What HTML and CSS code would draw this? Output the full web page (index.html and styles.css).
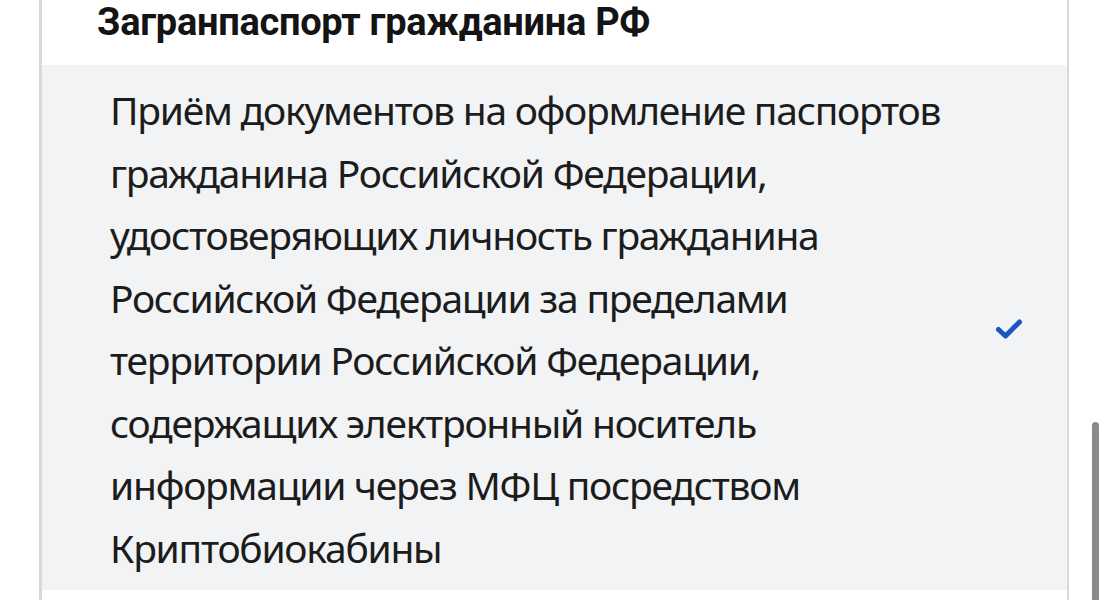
FILE: index.html
```html
<!DOCTYPE html>
<html lang="ru">
<head>
<meta charset="utf-8">
<link rel="stylesheet" href="styles.css">
</head>
<body>
<div class="page">
  <div class="card">
    <h2 class="group-title">Загранпаспорт гражданина РФ</h2>
    <div class="option selected">
      <p class="option-text">Приём документов на оформление паспортов<br>гражданина Российской Федерации,<br>удостоверяющих личность гражданина<br>Российской Федерации за пределами<br>территории Российской Федерации,<br>содержащих электронный носитель<br>информации через МФЦ посредством<br>Криптобиокабины</p>
      <svg class="check" viewBox="0 0 28 22" width="28" height="22" aria-hidden="true">
        <path d="M3.5 11.5 L10.5 18 L24.5 4" fill="none" stroke="#1d55c0" stroke-width="5" stroke-linecap="round" stroke-linejoin="round"/>
      </svg>
    </div>
    <div class="option"></div>
  </div>
  <div class="scrollbar"></div>
</div>
</body>
</html>
```
FILE: styles.css
```css
html, body {
  margin: 0;
  padding: 0;
  background: #ffffff;
}
.page {
  position: relative;
  width: 1106px;
  height: 600px;
  overflow: hidden;
}
.card {
  margin-left: 39px;
  width: 1025px;
  border-left: 3px solid #d8d9dc;
  border-right: 2px solid #d8d9dc;
  height: 600px;
}
.group-title {
  margin: 0;
  height: 65px;
  padding-left: 55px;
  font-family: Roboto, "Noto Sans", sans-serif;
  font-weight: 700;
  font-size: 38px;
  line-height: 44px;
  letter-spacing: -0.3px;
  color: #141414;
}
.option {
  display: flex;
  align-items: center;
  justify-content: space-between;
  padding: 14px 44px 11px 68px;
}
.option.selected {
  background: #f2f3f5;
}
.option-text {
  margin: 0;
  font-family: "Noto Sans", sans-serif;
  font-size: 39px;
  line-height: 62.5px;
  letter-spacing: -1.25px;
  color: #1c1c1c;
}
.check {
  flex: none;
  display: block;
}
.scrollbar {
  position: absolute;
  left: 1092px;
  top: 422px;
  width: 7px;
  height: 200px;
  border-radius: 4px;
  background: #8a8a8a;
}
```
